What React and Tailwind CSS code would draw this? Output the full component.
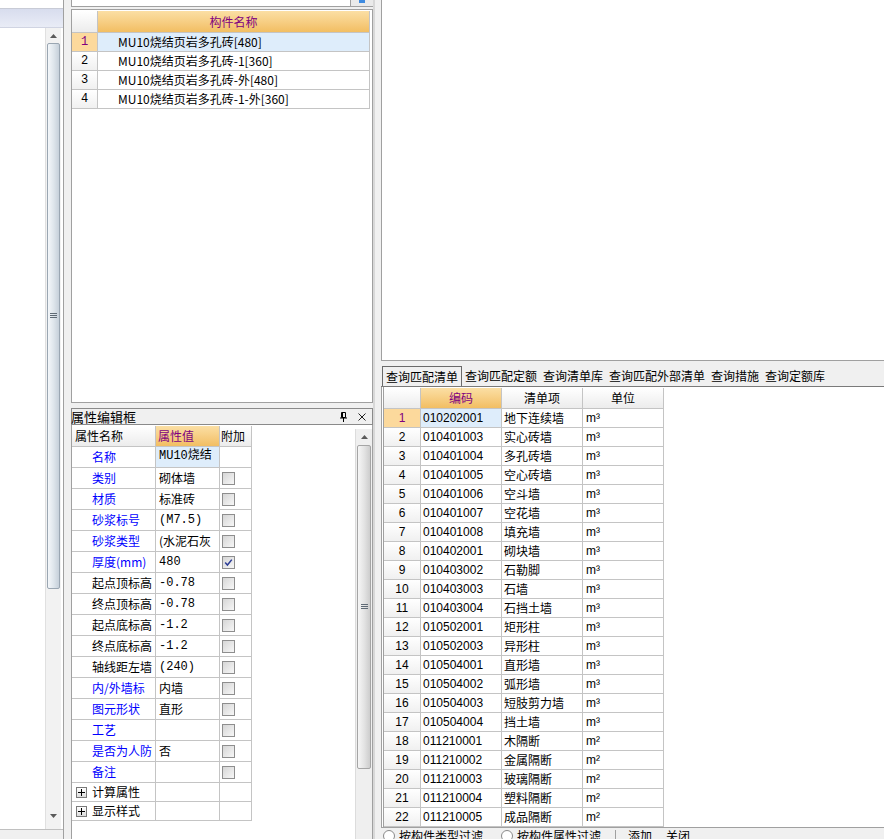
import React from "react";

const FONT = "font-['Noto_Sans_CJK_SC','Liberation_Sans',sans-serif]";

const topRows = [
  "MU10烧结页岩多孔砖[480]",
  "MU10烧结页岩多孔砖-1[360]",
  "MU10烧结页岩多孔砖-外[480]",
  "MU10烧结页岩多孔砖-1-外[360]",
];

const props = [
  { n: "名称", v: "MU10烧结", blue: true, cb: null, sel: true, mono: true },
  { n: "类别", v: "砌体墙", blue: true, cb: false },
  { n: "材质", v: "标准砖", blue: true, cb: false },
  { n: "砂浆标号", v: "(M7.5)", blue: true, cb: false, mono: true },
  { n: "砂浆类型", v: "(水泥石灰", blue: true, cb: false },
  { n: "厚度(mm)", v: "480", blue: true, cb: true, mono: true },
  { n: "起点顶标高", v: "-0.78", blue: false, cb: false, mono: true },
  { n: "终点顶标高", v: "-0.78", blue: false, cb: false, mono: true },
  { n: "起点底标高", v: "-1.2", blue: false, cb: false, mono: true },
  { n: "终点底标高", v: "-1.2", blue: false, cb: false, mono: true },
  { n: "轴线距左墙", v: "(240)", blue: false, cb: false, mono: true },
  { n: "内/外墙标", v: "内墙", blue: true, cb: false },
  { n: "图元形状", v: "直形", blue: true, cb: false },
  { n: "工艺", v: "", blue: true, cb: false },
  { n: "是否为人防", v: "否", blue: true, cb: false },
  { n: "备注", v: "", blue: true, cb: false },
];

const listRows = [
  ["010202001", "地下连续墙", 3],
  ["010401003", "实心砖墙", 3],
  ["010401004", "多孔砖墙", 3],
  ["010401005", "空心砖墙", 3],
  ["010401006", "空斗墙", 3],
  ["010401007", "空花墙", 3],
  ["010401008", "填充墙", 3],
  ["010402001", "砌块墙", 3],
  ["010403002", "石勒脚", 3],
  ["010403003", "石墙", 3],
  ["010403004", "石挡土墙", 3],
  ["010502001", "矩形柱", 3],
  ["010502003", "异形柱", 3],
  ["010504001", "直形墙", 3],
  ["010504002", "弧形墙", 3],
  ["010504003", "短肢剪力墙", 3],
  ["010504004", "挡土墙", 3],
  ["011210001", "木隔断", 2],
  ["011210002", "金属隔断", 2],
  ["011210003", "玻璃隔断", 2],
  ["011210004", "塑料隔断", 2],
  ["011210005", "成品隔断", 2],
];

const tabs = ["查询匹配清单", "查询匹配定额", "查询清单库", "查询匹配外部清单", "查询措施", "查询定额库"];

function Check({ checked }) {
  return (
    <div className="w-[13px] h-[13px] border border-[#8e8e8e] bg-linear-to-br from-[#d6d6d6] to-[#f7f7f7] flex items-center justify-center">
      {checked && (
        <svg width="9" height="9" viewBox="0 0 9 9">
          <path d="M1.2 4.6 L3.4 7 L7.8 1.6" stroke="#2b3b95" strokeWidth="1.5" fill="none" />
        </svg>
      )}
    </div>
  );
}

function Arrow({ up }) {
  return (
    <svg width="7" height="4" viewBox="0 0 7 4">
      {up ? <path d="M0 4 L3.5 0 L7 4 Z" fill="#5a5a5a" /> : <path d="M0 0 L3.5 4 L7 0 Z" fill="#5a5a5a" />}
    </svg>
  );
}

function Grip() {
  return (
    <svg width="7" height="6" viewBox="0 0 7 6">
      <path d="M0 0.5 H7 M0 2.5 H7 M0 4.5 H7" stroke="#5f6a75" strokeWidth="1" />
    </svg>
  );
}

function PlusBox() {
  return (
    <div className="w-[11px] h-[11px] border border-[#7a7a7a] bg-linear-to-b from-white to-[#dcdcdc] flex items-center justify-center">
      <svg width="7" height="7" viewBox="0 0 7 7">
        <path d="M0 3.5 H7 M3.5 0 V7" stroke="#000" strokeWidth="1" />
      </svg>
    </div>
  );
}

export default function App() {
  return (
    <div className={`${FONT} text-[12px] leading-none text-black w-[884px] h-[839px] overflow-hidden bg-[#f0f0f0] flex`}>
      {/* Left panel */}
      <div className="w-[64px] flex flex-col border-r border-[#a0a0a0] bg-white">
        <div className="h-[9px] bg-white border-b border-[#c8cbd6]" />
        <div className="h-[19px] bg-linear-to-b from-[#d8ddee] to-[#e9ecf6] border-b border-[#d0d4e2]" />
        <div className="flex-1 flex">
          <div className="flex-1 bg-white" />
          <div className="w-[16px] mr-[2px] flex flex-col bg-[#f2f2f2] border-l border-[#e0e0e0]">
            <div className="h-[14px] flex items-center justify-center mt-[1px]">
              <Arrow up />
            </div>
            <div className="h-[546px] mx-[1px] rounded-[2px] border border-[#9aa6b2] bg-linear-to-r from-[#f4f7fa] via-[#dfe6ec] to-[#c6d0da] flex items-center justify-center">
              <Grip />
            </div>
            <div className="flex-1" />
            <div className="h-[14px] flex items-center justify-center mb-[6px]">
              <Arrow />
            </div>
          </div>
        </div>
        <div className="h-[10px] bg-[#f0f0f0] border-t border-[#c0c0c0]" />
      </div>

      <div className="w-[7px]" />

      {/* Middle column */}
      <div className="w-[302px] flex flex-col">
        <div className="h-[7px] flex">
          <div className="flex-1 bg-white border-b border-r border-l border-[#a0a0a0]" />
          <div className="w-[22px] bg-[#eaeaea] border-b border-[#a0a0a0] flex justify-center">
            <div className="w-[6px] h-[3px] bg-[#3f8be0]" />
          </div>
        </div>
        <div className="h-[2px]" />
        <div className="h-[394px] bg-white border border-[#a0a0a0] pt-[1px]">
          <div className="grid grid-cols-[26px_272px]">
            <div className="h-[22px] bg-linear-to-b from-white to-[#ececec] border-r border-b border-[#c4c4c4]" />
            <div className="h-[22px] bg-linear-to-b from-[#fbdfa4] to-[#f2be62] border-r border-b border-[#c4c4c4] flex items-center justify-center text-[#800080]">
              构件名称
            </div>
            {topRows.map((t, i) => (
              <React.Fragment key={i}>
                <div
                  className={`h-[19px] border-r border-b border-[#c4c4c4] flex items-center justify-center font-['Liberation_Mono',monospace] ${
                    i === 0 ? "bg-[#fcd99c] text-[#800080]" : "bg-linear-to-b from-white to-[#f0f0f0]"
                  }`}
                >
                  {i + 1}
                </div>
                <div
                  className={`h-[19px] border-r border-b border-[#c4c4c4] flex items-center pl-[20px] whitespace-nowrap ${
                    i === 0 ? "bg-[#deedfb]" : "bg-white"
                  }`}
                >
                  {t}
                </div>
              </React.Fragment>
            ))}
          </div>
        </div>
        <div className="h-[5px]" />
        <div className="h-[17px] border border-[#8a8a8a] bg-[#f0f0f0] flex items-center pr-[4px]">
          <span className="text-[13px] -ml-[1px]">属性编辑框</span>
          <div className="flex-1" />
          <svg width="7" height="10" viewBox="0 0 7 10" className="mr-[11px]">
            <path d="M1.5 0.5 H5.5 V5.5 H1.5 Z M2.5 1 V5 M0 6 H7 M3.5 6 V10" stroke="#000" strokeWidth="1" fill="none" />
          </svg>
          <svg width="8" height="8" viewBox="0 0 8 8" className="mr-[2px]">
            <path d="M0.5 0.5 L7.5 7.5 M7.5 0.5 L0.5 7.5" stroke="#222" strokeWidth="1" />
          </svg>
        </div>
        <div className="flex-1 bg-white border-l border-r border-[#a0a0a0] flex pt-[1px]">
          <div className="w-[180px]">
            <div className="grid grid-cols-[84px_64px_32px]">
              <div className="h-[21px] bg-linear-to-b from-white to-[#ececec] border-r border-b border-[#c4c4c4] flex items-center pl-[3px]">
                属性名称
              </div>
              <div className="h-[21px] bg-linear-to-b from-[#fbdfa4] to-[#f2be62] border-r border-b border-[#c4c4c4] flex items-center pl-[2px] text-[#800080]">
                属性值
              </div>
              <div className="h-[21px] bg-linear-to-b from-white to-[#ececec] border-r border-b border-[#c4c4c4] flex items-center pl-[1px]">
                附加
              </div>
              {props.map((p, i) => (
                <React.Fragment key={i}>
                  <div
                    className={`h-[21px] border-r border-b border-[#c4c4c4] flex items-center pl-[20px] whitespace-nowrap overflow-hidden ${
                      p.blue ? "text-[#0000ff]" : "text-black"
                    }`}
                  >
                    {p.n}
                  </div>
                  <div
                    className={`h-[21px] border-r border-b border-[#c4c4c4] flex pl-[3px] whitespace-nowrap overflow-hidden ${
                      p.sel ? "bg-[#deedfb] items-start pt-[3px]" : "items-center"
                    } ${p.mono ? "font-['Liberation_Mono','Noto_Sans_CJK_SC',monospace]" : ""}`}
                  >
                    {p.v}
                  </div>
                  <div className="h-[21px] border-r border-b border-[#c4c4c4] flex items-center pl-[2px]">
                    {p.cb !== null && <Check checked={p.cb} />}
                  </div>
                </React.Fragment>
              ))}
              {["计算属性", "显示样式"].map((t) => (
                <React.Fragment key={t}>
                  <div className="h-[19px] border-r border-b border-[#c4c4c4] flex items-center pl-[4px] gap-[5px]">
                    <PlusBox />
                    {t}
                  </div>
                  <div className="h-[19px] border-r border-b border-[#c4c4c4]" />
                  <div className="h-[19px] border-r border-b border-[#c4c4c4]" />
                </React.Fragment>
              ))}
            </div>
          </div>
          <div className="flex-1" />
          <div className="w-[17px] flex flex-col bg-[#efefef] border-l border-[#dcdcdc] mt-[3px]">
            <div className="h-[16px] flex items-center justify-center">
              <Arrow up />
            </div>
            <div className="h-[324px] mx-[1px] rounded-[2px] border border-[#a5a5a5] bg-linear-to-r from-[#f6f6f6] via-[#e4e4e4] to-[#cdcdcd] flex items-center justify-center">
              <Grip />
            </div>
            <div className="flex-1" />
          </div>
        </div>
      </div>

      <div className="w-[8px] flex">
        <div className="w-[2px] bg-[#d8d8d8]" />
      </div>

      {/* Right panel */}
      <div className="flex-1 flex flex-col">
        <div className="h-[362px] bg-white border-l border-b border-[#a0a0a0]" />
        <div className="h-[5px]" />
        <div className="h-[21px] flex items-end border-b border-[#7a7a7a] pl-[1px]">
          {tabs.map((t, i) => (
            <div
              key={t}
              className={`h-[20px] flex items-center ${
                i === 0
                  ? "border-t border-l border-r border-[#6a6a6a] px-[3px] bg-[#f0f0f0]"
                  : i === 1
                  ? "ml-[3px]"
                  : "ml-[6px]"
              }`}
            >
              {t}
            </div>
          ))}
        </div>
        <div className="flex-1 bg-white border-l-[3px] border-double border-[#a0a0a0] flex flex-col pt-[1px]">
          <div className="grid grid-cols-[37px_81px_81px_81px] w-[280px]">
            <div className="h-[21px] bg-linear-to-b from-white to-[#ececec] border-r border-b border-[#c4c4c4]" />
            <div className="h-[21px] bg-linear-to-b from-[#fbdfa4] to-[#f2be62] border-r border-b border-[#c4c4c4] flex items-center justify-center text-[#800080]">
              编码
            </div>
            <div className="h-[21px] bg-linear-to-b from-white to-[#ececec] border-r border-b border-[#c4c4c4] flex items-center justify-center">
              清单项
            </div>
            <div className="h-[21px] bg-linear-to-b from-white to-[#ececec] border-r border-b border-[#c4c4c4] flex items-center justify-center">
              单位
            </div>
            {listRows.map(([code, name, p], i) => (
              <React.Fragment key={code}>
                <div
                  className={`h-[19px] border-r border-b border-[#c4c4c4] flex items-center justify-center font-['Liberation_Sans',sans-serif] ${
                    i === 0 ? "bg-[#fcd99c] text-[#800080]" : "bg-linear-to-b from-white to-[#f0f0f0]"
                  }`}
                >
                  {i + 1}
                </div>
                <div
                  className={`h-[19px] border-r border-b border-[#c4c4c4] flex items-center pl-[2px] font-['Liberation_Sans',sans-serif] ${
                    i === 0 ? "bg-[#deedfb]" : ""
                  }`}
                >
                  {code}
                </div>
                <div className="h-[19px] border-r border-b border-[#c4c4c4] flex items-center pl-[2px] whitespace-nowrap">
                  {name}
                </div>
                <div className="h-[19px] border-r border-b border-[#c4c4c4] flex items-center pl-[3px] font-['Liberation_Sans',sans-serif]">
                  {p === 3 ? "m³" : "m²"}
                </div>
              </React.Fragment>
            ))}
          </div>
          <div className="flex-1" />
        </div>
        <div className="h-[12px] bg-[#f0f0f0] border-t border-[#a0a0a0] flex items-start pt-[2px] pl-[2px] gap-[4px] whitespace-nowrap overflow-hidden">
          <div className="w-[12px] h-[12px] rounded-full border border-[#8a8a8a] bg-white" />
          <span>按构件类型过滤</span>
          <span className="w-[10px]" />
          <div className="w-[12px] h-[12px] rounded-full border border-[#8a8a8a] bg-white" />
          <span>按构件属性过滤</span>
          <div className="w-[1px] h-[12px] bg-[#a0a0a0] ml-[10px]" />
          <span className="ml-[8px]">添加</span>
          <span className="ml-[10px]">关闭</span>
        </div>
      </div>
    </div>
  );
}
